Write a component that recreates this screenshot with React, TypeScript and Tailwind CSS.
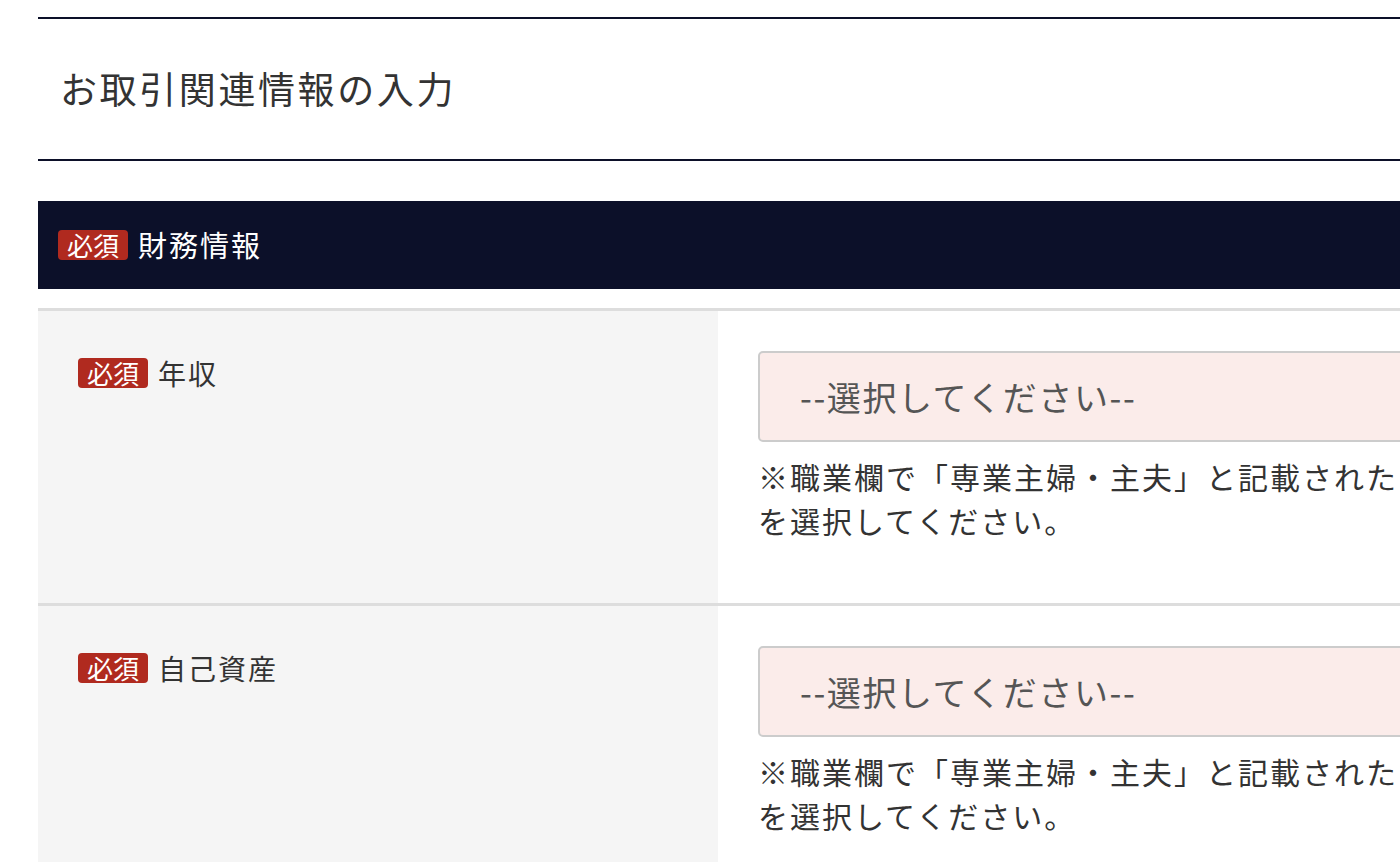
const font = { fontFamily: '"Noto Sans CJK JP", "Noto Sans", sans-serif' };

function Badge() {
  return (
    <span className="inline-flex h-[30px] w-[70px] items-center justify-center rounded-[4px] bg-[#b02a1f] text-[26px] leading-none text-white">
      必須
    </span>
  );
}

function Row({ label }: { label: string }) {
  return (
    <div className="grid grid-cols-[680px_1fr] border-t-[3px] border-[#dddddd]">
      <div className="bg-[#f5f5f5] px-[40px] pt-[47px]">
        <div className="flex items-center gap-[10px]">
          <Badge />
          <span className="text-[28px] leading-none tracking-[2px] text-[#333333]">{label}</span>
        </div>
      </div>
      <div className="px-[40px] pt-[40px] pb-[61px]">
        <div className="flex h-[91px] w-[900px] items-center rounded-[5px] border-2 border-[#cccccc] bg-[#fbecea] px-[40px] text-[34px] tracking-[1.6px] text-[#555555]">
          --選択してください--
        </div>
        <p className="mt-[12px] whitespace-nowrap text-[30px] leading-[44px] tracking-[2px] text-[#333333]">
          ※職業欄で「専業主婦・主夫」と記載された
          <br />
          を選択してください。
        </p>
      </div>
    </div>
  );
}

export default function App() {
  return (
    <div className="h-[862px] overflow-hidden bg-white" style={font}>
      <div className="w-[1600px] pl-[38px] pt-[17px]">
        <div className="flex h-[144px] items-center border-y-2 border-[#0c1029] pl-[22px]">
          <h1 className="text-[37px] font-normal tracking-[2.6px] text-[#333333]">お取引関連情報の入力</h1>
        </div>
        <div className="mt-[40px] flex h-[88px] items-center gap-[10px] bg-[#0c1029] px-[20px]">
          <Badge />
          <span className="text-[29px] tracking-[2px] text-white">財務情報</span>
        </div>
        <div className="mt-[19px]">
          <Row label="年収" />
          <Row label="自己資産" />
        </div>
      </div>
    </div>
  );
}
